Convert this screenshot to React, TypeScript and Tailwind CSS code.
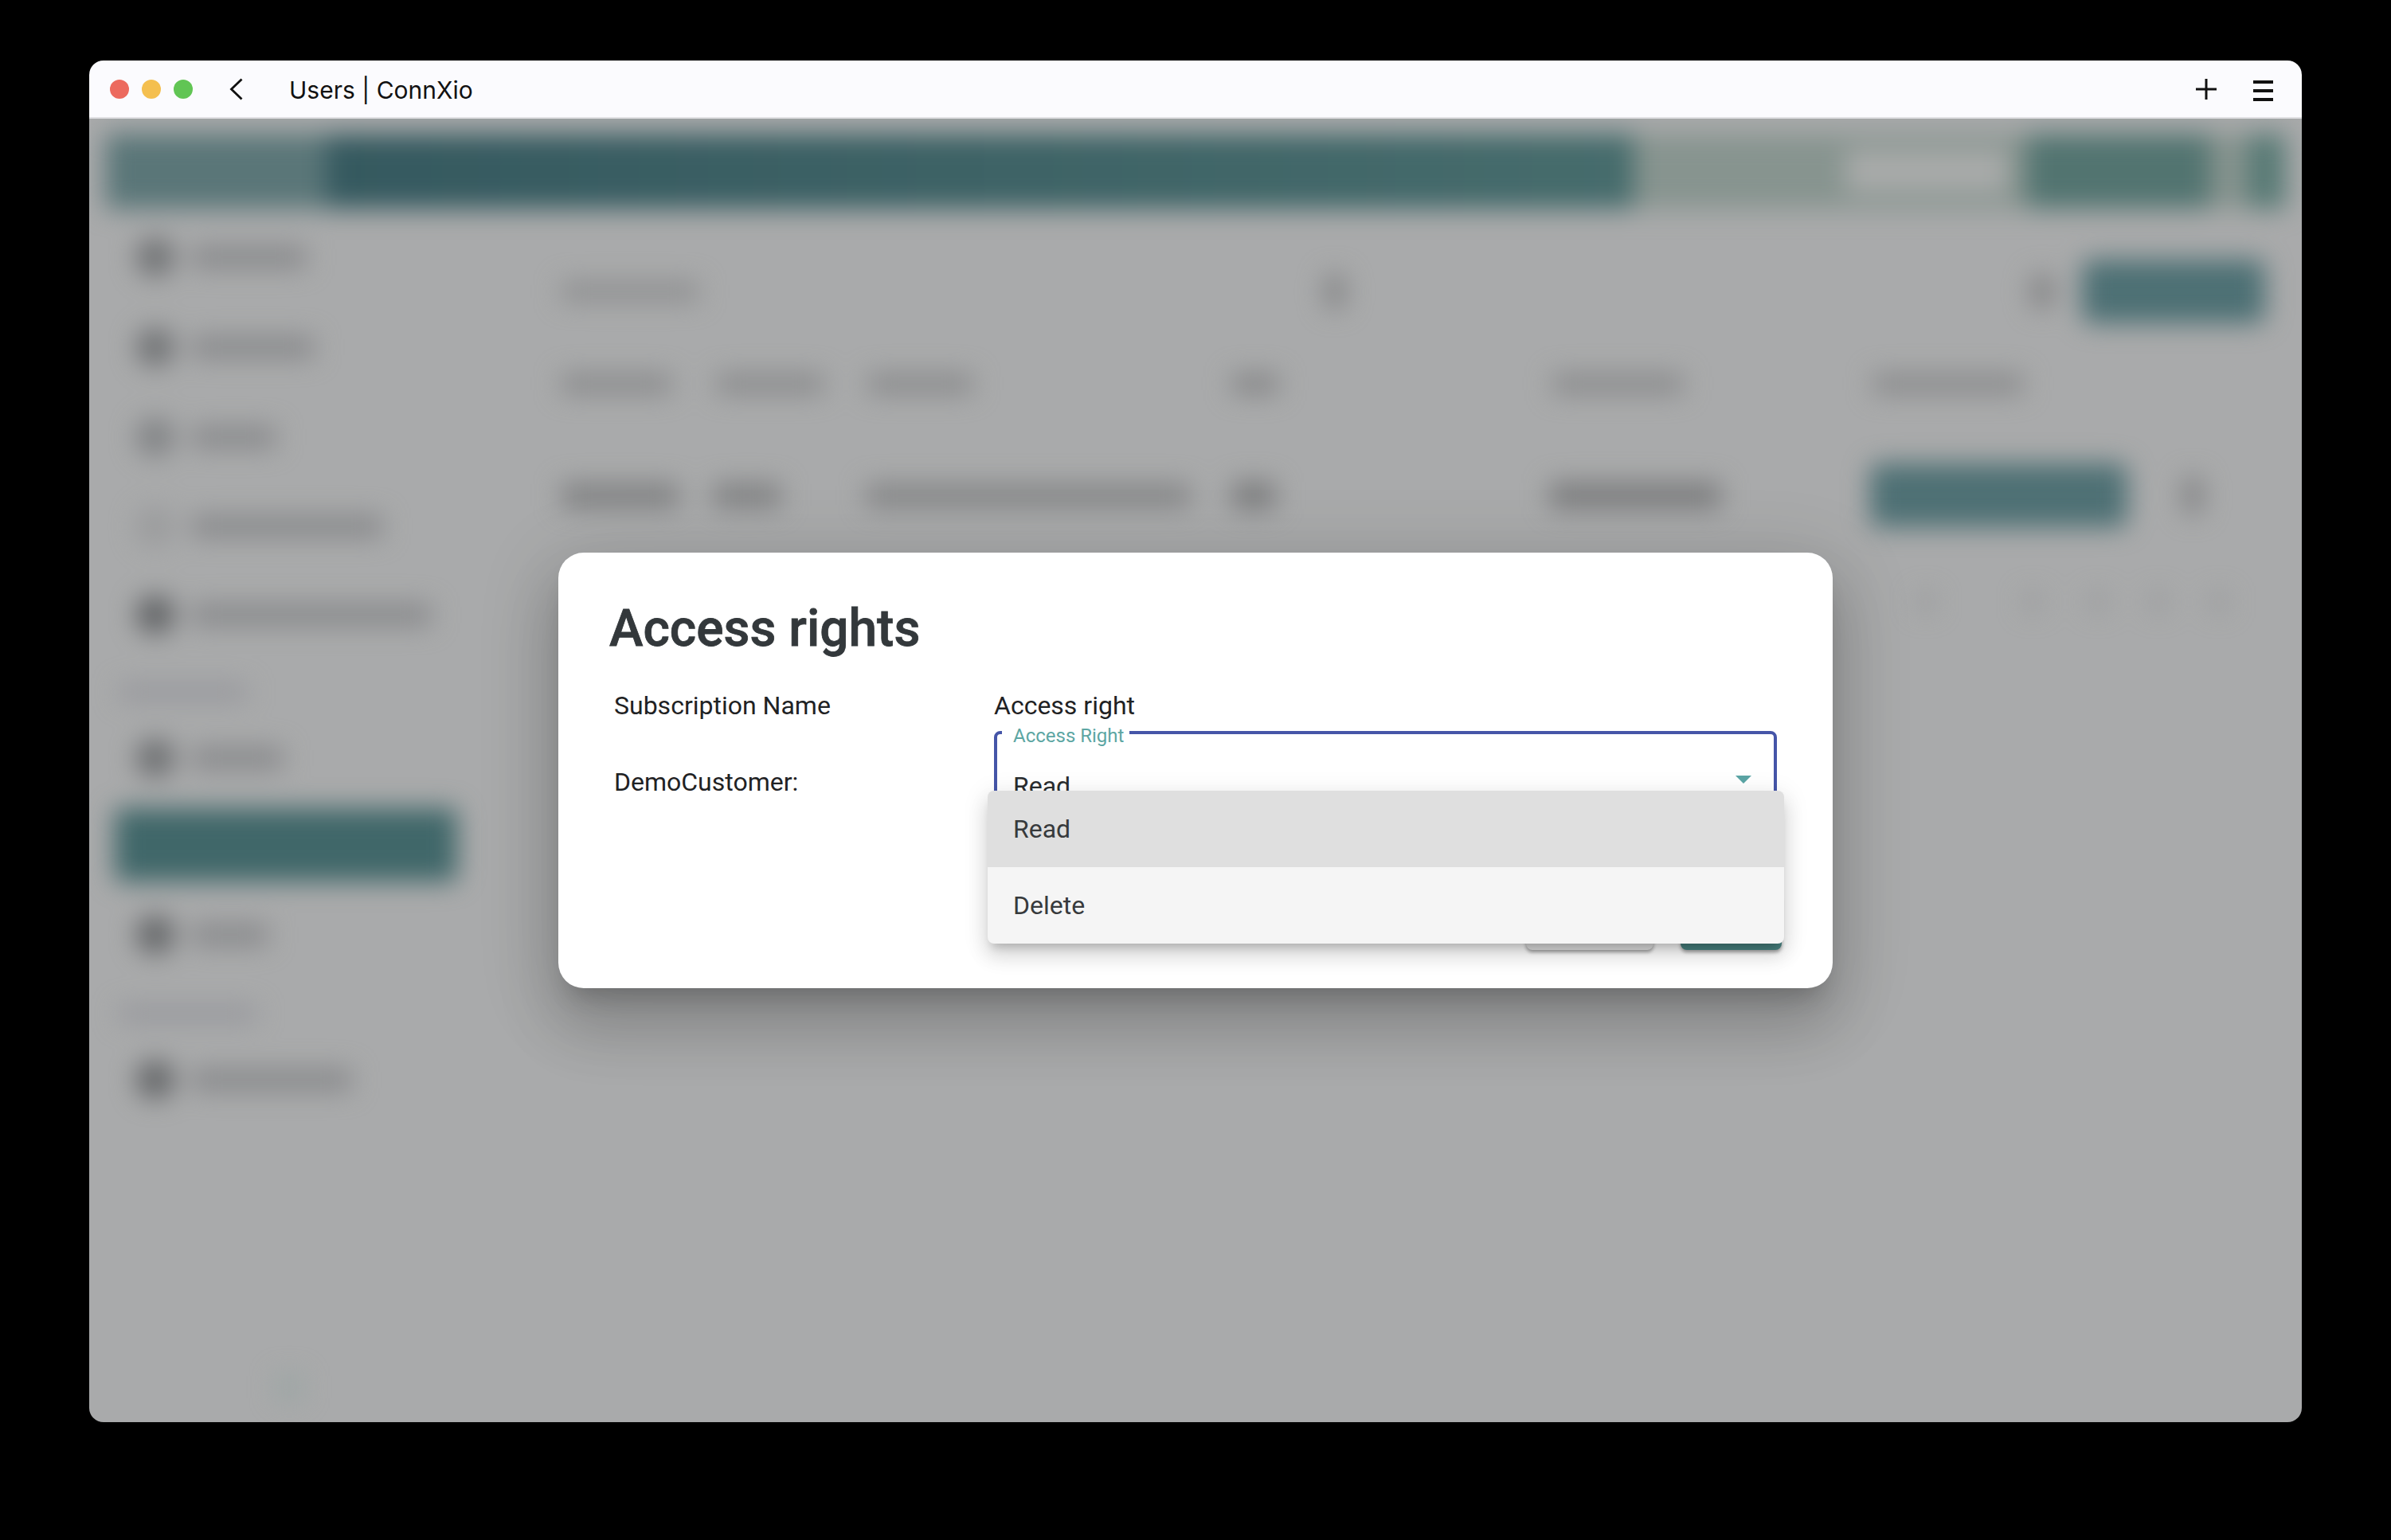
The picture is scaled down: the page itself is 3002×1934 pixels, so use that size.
import React from "react";

const sideRows = [
  { row: "h-[113px]", icon: "bg-[#6f7173]", text: "w-[143px]" },
  { row: "h-[113px]", icon: "bg-[#6f7173]", text: "w-[153px]" },
  { row: "h-[113px]", icon: "bg-[#808284]", text: "w-[105px]" },
  { row: "h-[112px]", icon: "bg-[#9a9b9c]", text: "w-[239px]" },
  { row: "h-[110px]", icon: "bg-[#5f6163]", text: "w-[300px]" },
];

function SideRow({ row, icon, text }: { row: string; icon: string; text: string }) {
  return (
    <div className={`${row} flex items-center pl-[59px]`}>
      <div className={`w-12 h-12 rounded-full ${icon}`} />
      <div className={`ml-[22px] h-[26px] ${text} bg-[#87888a]`} />
    </div>
  );
}

function Bar({ w, h = "h-[24px]", c = "bg-[#8a8b8d]" }: { w: string; h?: string; c?: string }) {
  return <div className={`${w} ${h} ${c}`} />;
}

function BlurredApp() {
  return (
    <div className="absolute inset-0 blur-[16px]">
      <div className="pt-[19px] px-[20px]">
        <div className="flex h-[94px] bg-[#87948f]">
          <div className="w-[280px] bg-[#5a7678]" />
          <div className="w-[1652px] bg-gradient-to-r from-[#35595f] to-[#466c6c]" />
          <div className="w-[267px]" />
          <div className="w-[206px] my-[20px] bg-[#a9abaa]" />
          <div className="w-[24px]" />
          <div className="w-[231px] bg-[#527470]" />
          <div className="w-[48px]" />
          <div className="w-[48px] bg-[#587a75]" />
        </div>
      </div>
      <div className="flex">
        <div className="w-[593px] shrink-0 pt-[4px]">
          {sideRows.map((r, i) => (
            <SideRow key={i} {...r} />
          ))}
          <div className="h-[84px] flex items-center pl-[38px]">
            <Bar w="w-[160px]" h="h-[18px]" c="bg-[#94959a]" />
          </div>
          <SideRow row="h-[82px]" icon="bg-[#6c6e70]" text="w-[114px]" />
          <div className="mt-[22px] h-[92px] ml-[32px] w-[430px] rounded-lg bg-[#406769]" />
          <SideRow row="h-[134px]" icon="bg-[#636567]" text="w-[95px]" />
          <div className="h-[64px] flex items-center pl-[38px]">
            <Bar w="w-[172px]" h="h-[18px]" c="bg-[#94959a]" />
          </div>
          <SideRow row="h-[102px]" icon="bg-[#636567]" text="w-[200px]" />
          <div className="mt-[320px] ml-[236px] w-[30px] h-[30px] bg-[#9aa5a3]" />
        </div>
        <div className="flex-1 pr-[46px]">
          <div className="mt-[64px] h-[80px] flex items-center">
            <Bar w="w-[172px]" c="bg-[#8e8f90]" />
            <div className="ml-[786px] w-[26px] h-[46px] rounded-full bg-[#858687]" />
            <div className="ml-[860px] w-[30px] h-[46px] rounded-full bg-[#858687]" />
            <div className="ml-[35px] w-[230px] h-[80px] rounded-xl bg-[#4d7074]" />
          </div>
          <div className="mt-[26px] h-[100px] grid grid-cols-[195px_190px_457px_403px_402px_1fr] items-center">
            <Bar w="w-[138px]" c="bg-[#898a8b]" />
            <Bar w="w-[134px]" c="bg-[#898a8b]" />
            <Bar w="w-[131px]" c="bg-[#898a8b]" />
            <Bar w="w-[58px]" c="bg-[#848586]" />
            <Bar w="w-[163px]" c="bg-[#898a8b]" />
            <Bar w="w-[188px]" c="bg-[#898a8b]" />
          </div>
          <div className="mt-[50px] h-[80px] grid grid-cols-[191px_192px_459px_399px_402px_1fr] items-center">
            <Bar w="w-[147px]" h="h-[30px]" c="bg-[#808182]" />
            <Bar w="w-[84px]" h="h-[30px]" c="bg-[#808182]" />
            <Bar w="w-[406px]" h="h-[28px]" c="bg-[#848586]" />
            <Bar w="w-[54px]" h="h-[34px]" c="bg-[#7c7d7e]" />
            <Bar w="w-[214px]" h="h-[32px]" c="bg-[#7b7c7d]" />
            <div className="flex items-center">
              <div className="w-[323px] h-[80px] rounded-xl bg-[#4e7074]" />
              <div className="ml-[70px] w-[24px] h-[50px] rounded-full bg-[#828384]" />
            </div>
          </div>
          <div className="mt-[84px] h-[20px] flex items-center pl-[1703px]">
            <Bar w="w-[20px]" h="h-[20px]" c="bg-[#98999a]" />
            <div className="ml-[114px]"><Bar w="w-[20px]" h="h-[20px]" c="bg-[#98999a]" /></div>
            <div className="ml-[62px]"><Bar w="w-[20px]" h="h-[20px]" c="bg-[#98999a]" /></div>
            <div className="ml-[56px]"><Bar w="w-[20px]" h="h-[20px]" c="bg-[#98999a]" /></div>
            <div className="ml-[56px]"><Bar w="w-[20px]" h="h-[20px]" c="bg-[#98999a]" /></div>
          </div>
        </div>
      </div>
    </div>
  );
}

function AccessDialog() {
  return (
    <div className="relative flex h-[547px] w-[1600px] flex-col rounded-[32px] bg-white px-[64px] pt-[58px] pb-[48px] shadow-[0_22px_30px_-14px_rgba(0,0,0,0.2),0_48px_76px_6px_rgba(0,0,0,0.14),0_18px_92px_16px_rgba(0,0,0,0.12)]">
      <h2 className="text-[64px] leading-[76px] font-medium text-[#33383b] [-webkit-text-stroke:0.8px_#33383b]">Access rights</h2>
      <div className="mt-[39px] ml-[6px] flex text-[32px] leading-[38px] text-[#1f2224]">
        <div className="w-[477px] shrink-0">
          <div>Subscription Name</div>
          <div className="mt-[58px]">DemoCustomer:</div>
        </div>
        <div className="w-[983px] shrink-0">
          <div>Access right</div>
          <div className="relative mt-[13px] h-[112px] rounded-lg border-4 border-[#4555a8] pl-[20px] pt-[46px]">
            <span className="absolute left-[6px] top-[-12px] bg-white pl-[14px] pr-[7px] text-[24px] leading-[28px] text-[#5ca6a3]">
              Access Right
            </span>
            <span className="text-[#2a2d2f]">Read</span>
            <svg className="absolute right-[28px] top-[52px]" width="20" height="10" viewBox="0 0 20 10">
              <polygon points="0,0 20,0 10,10" fill="#5ba5a5" />
            </svg>
          </div>
        </div>
      </div>
      <div className="mt-auto flex justify-end gap-[34px]">
        <button aria-label="Cancel" className="h-[72px] w-[160px] rounded-lg bg-[#e4e4e4] shadow-[0_3px_4px_rgba(0,0,0,0.35)]" />
        <button aria-label="Save" className="h-[72px] w-[127px] rounded-lg bg-[#4a8583] shadow-[0_3px_4px_rgba(0,0,0,0.35)]" />
      </div>
      <div className="absolute left-[539px] top-[299px] w-[1000px] overflow-hidden rounded-lg bg-[#f5f5f5] text-[32px] leading-[38px] text-[#373a3c] shadow-[0_10px_12px_-6px_rgba(0,0,0,0.2),0_16px_24px_2px_rgba(0,0,0,0.1),0_6px_30px_5px_rgba(0,0,0,0.08)]">
        <div className="flex h-[96px] items-center bg-[#dfdfdf] pl-[32px]">Read</div>
        <div className="flex h-[96px] items-center pl-[32px]">Delete</div>
      </div>
    </div>
  );
}

export default function App() {
  return (
    <div className="h-[1934px] w-[3002px] bg-black pt-[76px] pl-[112px] font-['Roboto',sans-serif]">
      <div className="flex h-[1710px] w-[2778px] flex-col overflow-hidden rounded-[18px]">
        <div className="flex h-[73px] shrink-0 items-center border-b-2 border-[#e1e1e4] bg-[#fbfbfe] pl-[26px] pr-[36px]">
          <div className="flex gap-4">
            <div className="h-6 w-6 rounded-full bg-[#ec6a5e]" />
            <div className="h-6 w-6 rounded-full bg-[#f4bf4f]" />
            <div className="h-6 w-6 rounded-full bg-[#61c554]" />
          </div>
          <svg className="ml-[46px]" width="18" height="28" viewBox="0 0 18 28" fill="none">
            <path d="M15.5 1.5 L2.5 14 L15.5 26.5" stroke="#111" strokeWidth="2.8" />
          </svg>
          <div className="ml-[57px] mt-[2px] text-[30px] leading-[36px] font-['Inter',sans-serif] text-[#111]">Users | ConnXio</div>
          <svg className="ml-auto" width="26" height="26" viewBox="0 0 26 26" fill="none">
            <path d="M13 0 V26 M0 13 H26" stroke="#111" strokeWidth="3" />
          </svg>
          <div className="ml-[46px] flex w-[25px] flex-col gap-[7px] pt-[4px]">
            <div className="h-1 bg-[#111]" />
            <div className="h-1 bg-[#111]" />
            <div className="h-1 bg-[#111]" />
          </div>
        </div>
        <div className="relative flex flex-1 items-center justify-center overflow-hidden bg-[#a9aaab]">
          <BlurredApp />
          <AccessDialog />
        </div>
      </div>
    </div>
  );
}
